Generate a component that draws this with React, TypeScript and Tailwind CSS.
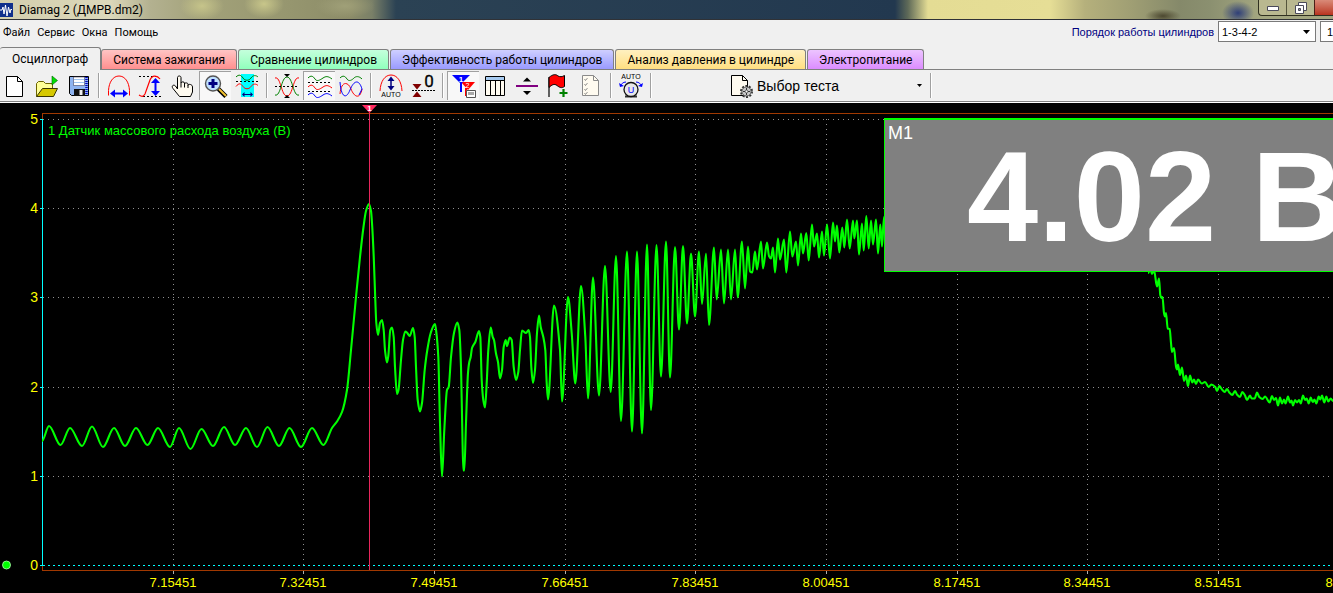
import clsx from "clsx";
import { useState } from "react";
import type { ReactNode } from "react";

type Point = [number, number];

const MENU = ["Файл", "Сервис", "Окна", "Помощь"];

const TABS = [
  { label: "Осциллограф", color: "" },
  { label: "Система зажигания", color: "from-[#ffc4c4] to-[#ff8f8f]" },
  { label: "Сравнение цилиндров", color: "from-[#c4ffdc] to-[#8fffbc]" },
  { label: "Эффективность работы цилиндров", color: "from-[#cfcfff] to-[#9a9aff]" },
  { label: "Анализ давления в цилиндре", color: "from-[#fff0c0] to-[#ffdf80]" },
  { label: "Электропитание", color: "from-[#ecc4ff] to-[#dc8cff]" },
];

const X_TICKS = [
  { x: 173, label: "7.15451" },
  { x: 303, label: "7.32451" },
  { x: 434, label: "7.49451" },
  { x: 565, label: "7.66451" },
  { x: 695, label: "7.83451" },
  { x: 826, label: "8.00451" },
  { x: 957, label: "8.17451" },
  { x: 1087, label: "8.34451" },
  { x: 1218, label: "8.51451" },
  { x: 1349, label: "8.68451" },
];

const Y_TICKS = [
  { y: 119, label: "5" },
  { y: 208, label: "4" },
  { y: 297, label: "3" },
  { y: 387, label: "2" },
  { y: 476, label: "1" },
  { y: 565, label: "0" },
];

// mass air flow samples, window coordinates
const SIGNAL = `
42,441 49,426 60.5,445 70,428 82,446 92,426.5 103,447 114,428 125,446 136,428 147.5,445 158,428
170,447 179,428 190.5,449 201.5,429 213,446 224,427 235,445 246,428 257,447 267.5,427 279,446
289.5,428 301,447 312,428 323.5,445 332,428 337,421.5 342,412 347,390 351,350 356,297 360,257
363.5,227 366,211 369,204 371,211 372,223 373.7,256 375.3,300 376.3,323 378,335 380,323 382,320
383.7,330 385,350 387,362.5 388.3,356 390.3,330 392,327.5 393.7,337 395,367 397,394 398.5,390
401,360 403,340 405.3,331.5 407.3,333 409.7,336 413,328 414.7,337 416,367 417.7,400 420,411.5
422,403 424.7,370 427.3,350 430.7,333 435,324 436.3,332 438.3,357 440,423 442,476.5 444.3,430
447,390 448.7,387 451,357 454,333 457.3,322.5 459.3,330 461,367 462.3,430 463.3,470.5 464.3,470.5
466,423 468,373 469.3,362 470.7,357 472,348 475.3,342 479,331 480.3,337 481.7,380 483.3,400
485,407.5 486.7,383 488.3,350 490.7,327.5 492.7,337 494,340 496,353.5 498,362 500,378.5 502,370
503.7,347 505.7,340 507,346 509.7,337.5 511.7,340 513.7,367 516,380 518.3,372 520,350 522,330.5
526,333 528.7,330 530,337 531.3,367 533,383 535,370 537,333 539,315.5 540.7,327 543.3,337
545.3,350 546.7,383 548,399.5 554,305.5 560,350 562,401.5 568,297 571.7,333 575.3,383.5 581,286
585.3,337 588,398.5 593,277.5 599,395.5 605,266 610.7,392 616,256 621,421 627,251.5 632,431.5
637,251.5 642,433.5 647,244.5 651,410 656.5,245 661,376.5 666,241.5 670,377.5 675,247 679,329.5
683,246 687,323.5 691,253.5 695,316.5 699,251.5 702,304 706,253.5 709,325 714,247.5 716.7,299.5
721,249.5 724,303.5 728,249.5 731,299.5 735,249.5 737.7,297.5 742,241.5 745,288.5 748,246.5
750,271.5 752.3,272.5 755,251.5 757,269.5 761,241.5 763,268.5 767,242.5 769,256 771,258.5
773,247.5 775,272.5 778,238.5 780,259.5 784,239.5 786.3,272.5 790,231.5 792.3,256.5 796,241.5
798,265.5 801,233.5 803,253.5 806.3,233 808.7,260.5 812,224.5 814,246.5 817,233.5 819,257.5
822,231.5 824,255.5 827,224.5 830,258.5 833,222.5 835,241.5 837,225.5 839.3,252.5 842.3,227.5
844.3,247.5 847,219.5 849.7,248.5 853,220.5 854.3,238.5 857,220.5 859,254.5 862,223.5 863.7,250.5
866.3,216 868.7,248.5 871,220.5 873,244.5 876,219.5 878,253.5 880.3,224.5 882,246.5 884,217`;

const SIGNAL_TAIL = `
1148,273 1150.5,269 1152,274 1154,270 1157,286.5 1159,278.5 1160.3,295 1161.5,298 1162.5,297
1164,313 1165,316.5 1166,313 1167.7,328.5 1169.7,329 1171,343 1172,352 1174,348 1176,366.5
1177,369.5 1178,364.5 1180,375 1182,367.5 1184,381 1186,375.5 1188,386 1190,375.5 1192.3,382.5
1194,379.5 1196,384 1198,379.5 1201.7,383.5 1205,382 1208.7,387 1211.3,384.5 1215.3,387 1217,391
1219.3,386 1222,389.5 1224.7,392 1227,389 1229.3,392.5 1232.3,395 1235,391 1237,394.5 1240,397
1242.3,392 1245,395.5 1247,400 1250,395.5 1251.7,398.5 1254.7,398.5 1257,392.5 1259.3,397
1262.7,399 1265,396.5 1269.7,402.5 1272,396 1274,400 1276,398 1278,405.5 1280,397.5 1282,403.5
1284,399.5 1285.5,403.5 1288,396.5 1290,402.5 1291.5,400.5 1293,405.5 1295,400 1297,402.5
1299,400 1300.7,403.5 1303,395.5 1305,400 1306.7,398.5 1308.7,403.5 1310.7,397.5 1312.7,402
1314.5,399.5 1316.3,403.5 1318.7,396.5 1320.3,399.5 1322,395.5 1324.3,402.5 1326.3,396.5
1328.3,401.5 1330.7,398.5 1333,401`;

const parsePoints = (text: string) =>
  text
    .trim()
    .split(/\s+/)
    .map((pair) => pair.split(",").map(Number) as Point);

// flat tangent at every peak, average slope in between
const smoothPath = (points: Point[]) => {
  const slope = (i: number) => {
    const prev = points[i - 1];
    const cur = points[i];
    const next = points[i + 1];
    if (!prev || !next) return 0;

    const a = (cur[1] - prev[1]) / (cur[0] - prev[0]);
    const b = (next[1] - cur[1]) / (next[0] - cur[0]);
    return a * b <= 0 ? 0 : (2 * a * b) / (a + b);
  };

  return points.reduce((d, [x, y], i) => {
    if (i === 0) return `M${x},${y}`;
    const [px, py] = points[i - 1];
    const h = (x - px) / 3;
    return `${d}C${px + h},${py + slope(i - 1) * h} ${x - h},${y - slope(i) * h} ${x},${y}`;
  }, "");
};

const SIGNAL_PATH = smoothPath(parsePoints(SIGNAL));
const TAIL_PATH = smoothPath(parsePoints(SIGNAL_TAIL));

const Icon = ({ children }: { children: ReactNode }) => (
  <svg viewBox="0 0 24 24" className="size-6 overflow-visible" fill="none" aria-hidden="true">
    {children}
  </svg>
);

const NewIcon = () => (
  <Icon>
    <path d="M3.500 2.500h11l5 5v15h-16z" fill="#fff" stroke="#000" />
    <path d="M14.500 2.500v5h5" stroke="#000" />
  </Icon>
);

const OpenIcon = () => (
  <Icon>
    <path d="M1.500 22.500v-13l2-2h5l2 2h7v5" fill="#ffff99" stroke="#6b6400" />
    <path d="M1.500 22.500l6-8h15l-4 8z" fill="#d6c800" stroke="#3a3600" />
    <path d="M17 2v9l5.500-4.500z" fill="#00e000" stroke="#006000" strokeWidth=".6" />
  </Icon>
);

const SaveIcon = () => (
  <Icon>
    <path d="M2.500 2.500h19v19h-17l-2-2z" fill="#8fb4f0" stroke="#000" />
    <path d="M19.500 3v18" stroke="#0000c0" strokeWidth="2.500" strokeDasharray="1 1" />
    <path d="M6.500 3h11v8.500h-11z" fill="#fff" stroke="#446" strokeWidth=".6" />
    <path d="M7 5.500h10M7 8.500h10" stroke="#a0c4f0" />
    <path d="M7 15h11v7H7z" fill="#111" />
    <path d="M12.500 16h3v5h-3z" fill="#eee" />
  </Icon>
);

const WidthIcon = () => (
  <Icon>
    <path d="M1.500 21.500v-5C2 8 6 2 12 2s10 6 10.500 14.500v5" stroke="#f00" />
    <path d="M5 19.500h14" stroke="#00f" strokeWidth="2" />
    <path d="M8 15.500v8l-5-4zM16 15.500v8l5-4z" fill="#00f" />
  </Icon>
);

const HeightIcon = () => (
  <Icon>
    <path d="M0 2.500h20M4 22.500h18" stroke="#000" strokeDasharray="2 2" />
    <path d="M0 21c3 2 4 2 6-1l5-14c2-5 7-5 10-1" stroke="#f00" strokeWidth="1.200" />
    <path d="M16.500 7v12" stroke="#00f" strokeWidth="2" />
    <path d="M12 9h9l-4.500-5zM12 17h9l-4.500 5z" fill="#00f" />
  </Icon>
);

const HandIcon = () => (
  <Icon>
    <path
      d="M6.500 15V3.500c0-2 3.500-2 3.500 0V9c0-1.500 3.500-1.500 3.500 0v1c0-1.500 3.500-1.500 3.500.3v1c0-1.500 4.500-1.300 4.500 1.700V18l-2 4.500H8.500L2 14.500c-2-2.500.5-4.500 2.500-2.500z"
      fill="#fffbf0"
      stroke="#000"
    />
    <path d="M10 9v4.500M13.500 10v3.500M17 11v3" stroke="#000" />
  </Icon>
);

const ZoomIcon = () => (
  <Icon>
    <path d="M14.500 15l7.500 7.500" stroke="#000" strokeWidth="4.500" />
    <path d="M15 15l7 7" stroke="#f2c230" strokeWidth="2" />
    <circle cx="9" cy="9.500" r="7.500" fill="#bfe0ff" stroke="#555" strokeWidth="1.400" />
    <path d="M4.500 9.500h9M9 5v9" stroke="#000080" strokeWidth="3" />
  </Icon>
);

const RangeIcon = () => (
  <Icon>
    <path d="M6 0h13v23H6z" fill="#0ff" />
    <path d="M1 3c3-3 5-2 7 1s6 3 8 0 5-3 7-1" stroke="#008000" />
    <path d="M1 12.500c3-4 5-3 7 0s6 3 8 0 5-3 7-1" stroke="#f00" />
    <path d="M1 7.500h22" stroke="#000" strokeDasharray="2 2" />
    <path d="M8 20.500h9" stroke="#000080" />
    <path d="M9.500 18v5L7 20.500zM15.500 18v5l2.500-2.500z" fill="#000080" />
  </Icon>
);

const SymmetryIcon = () => (
  <Icon>
    <path d="M0 4c6-2 6 18 12 18S18 2 24 4" stroke="#f00" />
    <path d="M0 21c6 2 6-18 12-18s6 20 12 18" stroke="#008000" />
    <path d="M0 12.500h24" stroke="#000" strokeDasharray="2 2" />
    <path d="M9 0h6l-3 3zM9 24h6l-3-3z" fill="#000" />
  </Icon>
);

const WavesIcon = () => (
  <Icon>
    <path d="M0 4c3-3 5-2 7 1s5 1 8-1 5-2 9 1" stroke="#008000" />
    <path d="M0 13c3-3 5-2 7 1s5 1 8-1 5-2 9 1" stroke="#f00" />
    <path d="M0 21c3-3 5-2 7 1s5 1 8-1 5-2 9 1" stroke="#00f" />
    <path d="M0 8.500h24M0 17.500h24" stroke="#000" strokeDasharray="2 2" />
  </Icon>
);

const OverlayIcon = () => (
  <Icon>
    <path d="M1 4c3-3 5-2 7 1s5 1 7-1 5-2 8 1" stroke="#008000" />
    <path d="M1 20C2 7 9 7 12 15s9 11 11 0" stroke="#f00" />
    <path d="M1 8c1 15 6 18 10 8s9-11 12-1l-3 6" stroke="#00f" />
  </Icon>
);

const AutoHeightIcon = () => (
  <Icon>
    <path d="M1 17C1.500 7 6 1 12 1s10.500 6 11 16" stroke="#f00" />
    <path d="M12 5v9" stroke="#000080" strokeWidth="1.500" />
    <path d="M8.500 7h7L12 2.500zM8.500 12h7L12 16.500z" fill="#000080" />
    <text x="12" y="23" textAnchor="middle" fontSize="7" fill="#000">
      AUTO
    </text>
  </Icon>
);

const ZeroIcon = () => (
  <Icon>
    <path d="M1 16.500h23" stroke="#000" strokeDasharray="2 1" />
    <path d="M1.500 10h9L6 15.500zM1.500 23h9L6 17.500z" fill="#800000" />
    <text x="18" y="13" textAnchor="middle" fontSize="17" fill="#000" stroke="#000" strokeWidth=".3" className="font-['Roboto']">
      0
    </text>
  </Icon>
);

const MarkersIcon = () => (
  <Icon>
    <path d="M9 8h14l-7 8zM13 14h2v8h-2z" fill="#f00" />
    <path d="M0 1h18l-8 8v9H8V9z" fill="#00f" />
    <text x="9" y="7.500" textAnchor="middle" fontSize="8" fill="#fff" fontWeight="bold">
      1
    </text>
    <text x="15.500" y="14" textAnchor="middle" fontSize="7" fill="#fff">
      2
    </text>
    <path d="M14.500 16.500h9v7h-9z" fill="#fff" stroke="#555" />
    <path d="M17 18v3M19 18v3M21 18v3" stroke="#555" />
  </Icon>
);

const TableIcon = () => (
  <Icon>
    <path d="M2.500 2.500h19v19h-19z" fill="#fffbf0" stroke="#000" />
    <path d="M3 3h18v3H3z" fill="#a6caf0" />
    <path d="M2 6.500h19.500M7.500 7v14M12.500 7v14M17.500 7v14" stroke="#000" />
  </Icon>
);

const SplitIcon = () => (
  <Icon>
    <path d="M1 12h22" stroke="#800080" strokeWidth="2" />
    <path d="M8 7.500h8l-4-4zM8 17h8l-4 4z" fill="#000" />
  </Icon>
);

const FlagIcon = () => (
  <Icon>
    <path d="M2 3v20" stroke="#000" strokeWidth="1.200" />
    <path d="M2 3.500C6 0 9 0 11 2c2 1 4 1 6.500-.5v11c-3 2-5 1-7.500-1s-5-1-8 2z" fill="#f00" stroke="#000" />
    <path d="M12.500 19h8M16.500 15v8" stroke="#008000" strokeWidth="2.200" />
  </Icon>
);

const ChecklistIcon = () => (
  <Icon>
    <path d="M3.500 1.500h11l5 5v15h-16z" fill="#fffbf0" stroke="#8a8a8a" />
    <path d="M14.500 1.500v5h5" stroke="#8a8a8a" />
    <path
      d="M5.500 5l1 1.500 2-2.500M5.500 10l1 1.500 2-2.500M5.500 15l1 1.500 2-2.500M5.500 19l1 1.500 2-2.500"
      stroke="#777"
      strokeWidth=".8"
    />
  </Icon>
);

const AutoVoltIcon = () => (
  <Icon>
    <text x="12" y="5" textAnchor="middle" fontSize="7" fill="#000">
      AUTO
    </text>
    <path d="M7 8C4 8 2 10 2 12M17 8c3 0 5 2 5 4" stroke="#00f" />
    <path d="M0 9l1 4 4-1zM24 9l-1 4-4-1z" fill="#00f" />
    <path d="M6 22.500h12" stroke="#333" strokeWidth="2" />
    <circle cx="12" cy="15.500" r="7" fill="#e8e8e8" stroke="#111" strokeWidth="1.300" />
    <text x="12" y="19" textAnchor="middle" fontSize="9" fill="#00f">
      U
    </text>
  </Icon>
);

const TestIcon = () => (
  <Icon>
    <path d="M2.500 1.500h11l5 5v15h-16z" fill="#fffbf0" stroke="#000" />
    <path d="M13.500 1.500v5h5" stroke="#000" />
    <circle cx="17.500" cy="17.500" r="5.500" stroke="#333" strokeWidth="2" strokeDasharray="2 1.450" />
    <circle cx="17.500" cy="17.500" r="4.600" fill="#c8c8c8" stroke="#555" />
    <path d="M14 17.500h7M17.500 14v7" stroke="#333" />
    <circle cx="17.500" cy="17.500" r="1.400" fill="#fff" stroke="#333" strokeWidth=".7" />
  </Icon>
);

const TOOL_GROUPS = [
  [
    { title: "Новый", icon: <NewIcon /> },
    { title: "Открыть", icon: <OpenIcon /> },
    { title: "Сохранить", icon: <SaveIcon /> },
  ],
  [
    { title: "Растянуть по ширине", icon: <WidthIcon /> },
    { title: "Растянуть по высоте", icon: <HeightIcon /> },
    { title: "Перемещение", icon: <HandIcon /> },
    { title: "Масштаб", icon: <ZoomIcon />, pressed: true },
    { title: "Выделение", icon: <RangeIcon /> },
  ],
  [
    { title: "Инверсия", icon: <SymmetryIcon /> },
    { title: "Раздельно", icon: <WavesIcon />, pressed: true },
    { title: "Совместно", icon: <OverlayIcon /> },
  ],
  [
    { title: "Автомасштаб", icon: <AutoHeightIcon /> },
    { title: "Установка нуля", icon: <ZeroIcon /> },
  ],
  [
    { title: "Маркеры", icon: <MarkersIcon />, pressed: true },
    { title: "Таблица", icon: <TableIcon /> },
    { title: "Разделитель", icon: <SplitIcon /> },
    { title: "Добавить флаг", icon: <FlagIcon /> },
    { title: "Отчёт", icon: <ChecklistIcon /> },
  ],
  [{ title: "Автоматическое напряжение", icon: <AutoVoltIcon /> }],
];

const TitleBar = () => (
  <header className="flex h-5 items-center overflow-hidden border-b border-[#303236] bg-[radial-gradient(ellipse_22px_14px_at_202px_6px,#c6c48a,transparent),radial-gradient(ellipse_20px_14px_at_264px_4px,#c8c68a,transparent),radial-gradient(ellipse_30px_12px_at_345px_6px,#a0a078,transparent),radial-gradient(ellipse_18px_7px_at_1163px_16px,#4c4830,transparent),radial-gradient(ellipse_16px_12px_at_1238px_13px,#2f3f78,transparent),linear-gradient(90deg,#d3cfae_0,#dcd8ba_110px,#b3b190_150px,#a3a27a_200px,#96966f_290px,#8c8c68_350px,#7a8068_372px,#2b4254_396px,#22384f_895px,#5f6a58_908px,#e4dc94_928px,#e6de96_1050px,#b5b07c_1085px,#a09f74_1130px,#85896a_1180px,#8b9070_1210px,#a3a680_1260px,#a3a680_100%)]">
    <svg viewBox="0 0 14 14" className="h-3.5 w-3.5" aria-hidden="true">
      <path d="M0 0h13v14H0z" fill="#10308c" />
      <path d="M0 7h2l1-3 1 7 1.500-9L7 13l1.500-9L10 10l1-4 1 1" stroke="#fff" fill="none" />
    </svg>
    <h1 className="ml-[5px] font-['Roboto'] text-xs leading-4 text-black">Diamag 2 (ДМРВ.dm2)</h1>
    <div className="ml-auto flex h-4 w-[75px] shrink-0 self-start overflow-hidden rounded-bl border-b border-l border-[#303020] bg-[#b9b890]">
      <button type="button" aria-label="Свернуть" className="flex w-7 shrink-0 items-center justify-center border-r border-[#55553c]">
        <svg viewBox="0 0 12 6" className="h-1.5 w-3">
          <path d="M.5 1.500h11v4H.5z" fill="#fff" stroke="#4a4a5a" />
        </svg>
      </button>
      <button type="button" aria-label="Развернуть" className="flex w-7 shrink-0 items-center justify-center border-r border-[#4a2018]">
        <svg viewBox="0 0 12 12" className="size-3">
          <path d="M3.500 .5h8v8h-8z" fill="#fff" stroke="#4a4a5a" />
          <path d="M.5 3.500h8v8h-8z" fill="#fff" stroke="#4a4a5a" />
          <path d="M3.500 6.500h2v2h-2z" fill="#999" stroke="#4a4a5a" />
        </svg>
      </button>
      <button type="button" aria-label="Закрыть" className="w-11 shrink-0 bg-linear-to-b from-[#d98a78] to-[#b8321e]" />
    </div>
  </header>
);

const MenuBar = () => (
  <div className="flex h-[27px] items-start justify-between text-[11px] leading-4">
    <nav className="flex gap-[7px] pt-[5px] pl-[3px] font-['Roboto']">
      {MENU.map((item) => (
        <button key={item} type="button">
          {item}
        </button>
      ))}
    </nav>
    <div className="flex items-start gap-1 pt-px">
      <label htmlFor="order" className="pt-[3px] text-[#000080]">
        Порядок работы цилиндров
      </label>
      <div className="relative">
        <select
          id="order"
          className="block h-[21px] w-[98px] appearance-none border border-[#7a7a7a] bg-white pl-[3px] leading-4"
        >
          <option>1-3-4-2</option>
          <option>1-2-4-3</option>
        </select>
        <svg viewBox="0 0 7 4" className="pointer-events-none absolute top-[9px] right-[6px] h-1 w-[7px]">
          <path d="M0 0h7L3.500 4z" fill="#000" />
        </svg>
      </div>
      <div className="w-[13px] overflow-hidden">
        <select
          aria-label="Номер цилиндра"
          className="h-[21px] w-[98px] appearance-none border border-[#7a7a7a] bg-white pl-[6px] leading-4"
        >
          <option>1</option>
          <option>2</option>
        </select>
      </div>
    </div>
  </div>
);

interface TabsProps {
  active: number;
  onChange: (index: number) => void;
}

const Tabs = ({ active, onChange }: TabsProps) => (
  <div
    role="tablist"
    className="flex h-[23px] items-end gap-px border-b border-[#808080] font-['Roboto'] text-xs leading-4"
  >
    {TABS.map(({ label, color }, i) => (
      <button
        key={label}
        type="button"
        role="tab"
        aria-selected={i === active}
        onClick={() => onChange(i)}
        className={clsx(
          "shrink-0 rounded-t-[3px] border border-b-0 border-[#808080] whitespace-nowrap",
          i === active
            ? "-mr-px -mb-px h-[23px] border-l-0 bg-[#f0f0f0] px-3"
            : "h-5 bg-linear-to-b px-[11px]",
          i !== active && color
        )}
      >
        {label}
      </button>
    ))}
  </div>
);

const Separator = () => (
  <div className="flex w-2 shrink-0 justify-center py-0.5">
    <div className="w-px bg-[#a0a0a0]" />
    <div className="w-px bg-white" />
  </div>
);

const Toolbar = () => (
  <div className="flex h-[33px] border-b border-white shadow-[inset_0_-1px_#808080]">
    <div className="-ml-px flex pt-px pb-0.5">
      {TOOL_GROUPS.map((group, i) => (
        <div key={i} className="flex">
          {group.map(({ title, icon, ...tool }) => {
            const pressed = "pressed" in tool;
            return (
              <button
                key={title}
                type="button"
                title={title}
                aria-pressed={pressed}
                className={clsx(
                  "flex w-8 items-center justify-center",
                  pressed && "border-t border-l border-[#a0a0a0] bg-[#f8f8f8]"
                )}
              >
                {icon}
              </button>
            );
          })}
          <Separator />
        </div>
      ))}
      <div className="relative flex w-[272px] items-center">
        <label htmlFor="test" className="absolute left-[74px]" aria-label="Выбор теста">
          <TestIcon />
        </label>
        <select id="test" className="h-full w-full appearance-none pl-[102px] text-sm text-black">
          <option>Выбор теста</option>
        </select>
        <svg viewBox="0 0 5 3" className="pointer-events-none absolute right-[5px] h-[3px] w-[5px]">
          <path d="M0 0h5L2.500 3z" fill="#000" />
        </svg>
      </div>
      <Separator />
    </div>
  </div>
);

const Chart = () => (
  <svg className="block h-[490px] w-full text-[13px]" role="img" aria-label="Датчик массового расхода воздуха">
    <g transform="translate(0 -103)">
      <g shapeRendering="crispEdges" fill="none">
        {Y_TICKS.slice(0, 5).map(({ y }) => (
          <line key={y} x1="43" x2="100%" y1={y + 0.5} y2={y + 0.5} stroke="#909090" strokeDasharray="1 4" />
        ))}
        {X_TICKS.map(({ x }) => (
          <g key={x}>
            <line x1={x + 0.5} x2={x + 0.5} y1="119" y2="565" stroke="#909090" strokeDasharray="1 4" />
            <line x1={x + 0.5} x2={x + 0.5} y1="571" y2="574" stroke="#b0b0b0" />
          </g>
        ))}
        <line x1="42" x2="100%" y1="113.5" y2="113.5" stroke="#a03800" />
        <line x1="42" x2="100%" y1="570.5" y2="570.5" stroke="#a03800" />
        <line x1="42.5" x2="42.5" y1="113" y2="571" stroke="#a03800" />
        <line x1="43" x2="100%" y1="565.5" y2="565.5" stroke="#00ffff" strokeDasharray="2 3" />
        <line x1="42.5" x2="42.5" y1="119" y2="566" stroke="#00ffff" />
        {Y_TICKS.map(({ y }) => (
          <line key={y} x1="40" x2="43" y1={y + 0.5} y2={y + 0.5} stroke="#00ffff" />
        ))}
      </g>

      <path d={SIGNAL_PATH} fill="none" stroke="#00ff00" strokeWidth="2.1" strokeLinejoin="round" />
      <path d={TAIL_PATH} fill="none" stroke="#00ff00" strokeWidth="2.1" strokeLinejoin="round" />

      <path d="M369.500 112v458" stroke="#e8265c" shapeRendering="crispEdges" />
      <path d="M362 105h15l-7.500 8z" fill="#ff2860" />
      <text x="369.500" y="111" textAnchor="middle" fontSize="8" fontWeight="bold" fill="#fff">
        1
      </text>

      <circle cx="6.500" cy="565" r="4" fill="#00ff00" stroke="#b0ffb0" strokeWidth=".8" />
      <text x="48" y="135" fill="#00ff00">
        1 Датчик массового расхода воздуха (В)
      </text>
      {Y_TICKS.map(({ y, label }) => (
        <text key={label} x="38" y={y + 5} textAnchor="end" fill="#ffff00" fontSize="14">
          {label}
        </text>
      ))}
      {X_TICKS.map(({ x, label }) => (
        <text key={label} x={x} y="587" textAnchor="middle" fill="#ffff00">
          {label}
        </text>
      ))}
    </g>
  </svg>
);

const App = () => {
  const [activeTab, setActiveTab] = useState(0);

  return (
    <div className="flex min-h-screen flex-col overflow-hidden bg-[#f0f0f0] font-['Liberation_Sans',sans-serif] text-black">
      <TitleBar />
      <MenuBar />
      <Tabs active={activeTab} onChange={setActiveTab} />
      <Toolbar />
      <main className="relative flex-1 overflow-hidden bg-black">
        <Chart />
        <section className="absolute top-[15px] right-0 left-[884px] h-[154px] overflow-hidden border-2 border-r-0 border-b border-l border-[#00ff00] bg-[#808080] whitespace-nowrap text-white">
          <h2 className="pt-px pl-[3px] text-lg leading-6">M1</h2>
          <p className="-mt-3 pl-[82px] text-[128px] leading-[128px] font-bold">4.02 В</p>
        </section>
      </main>
    </div>
  );
};

export default App;
